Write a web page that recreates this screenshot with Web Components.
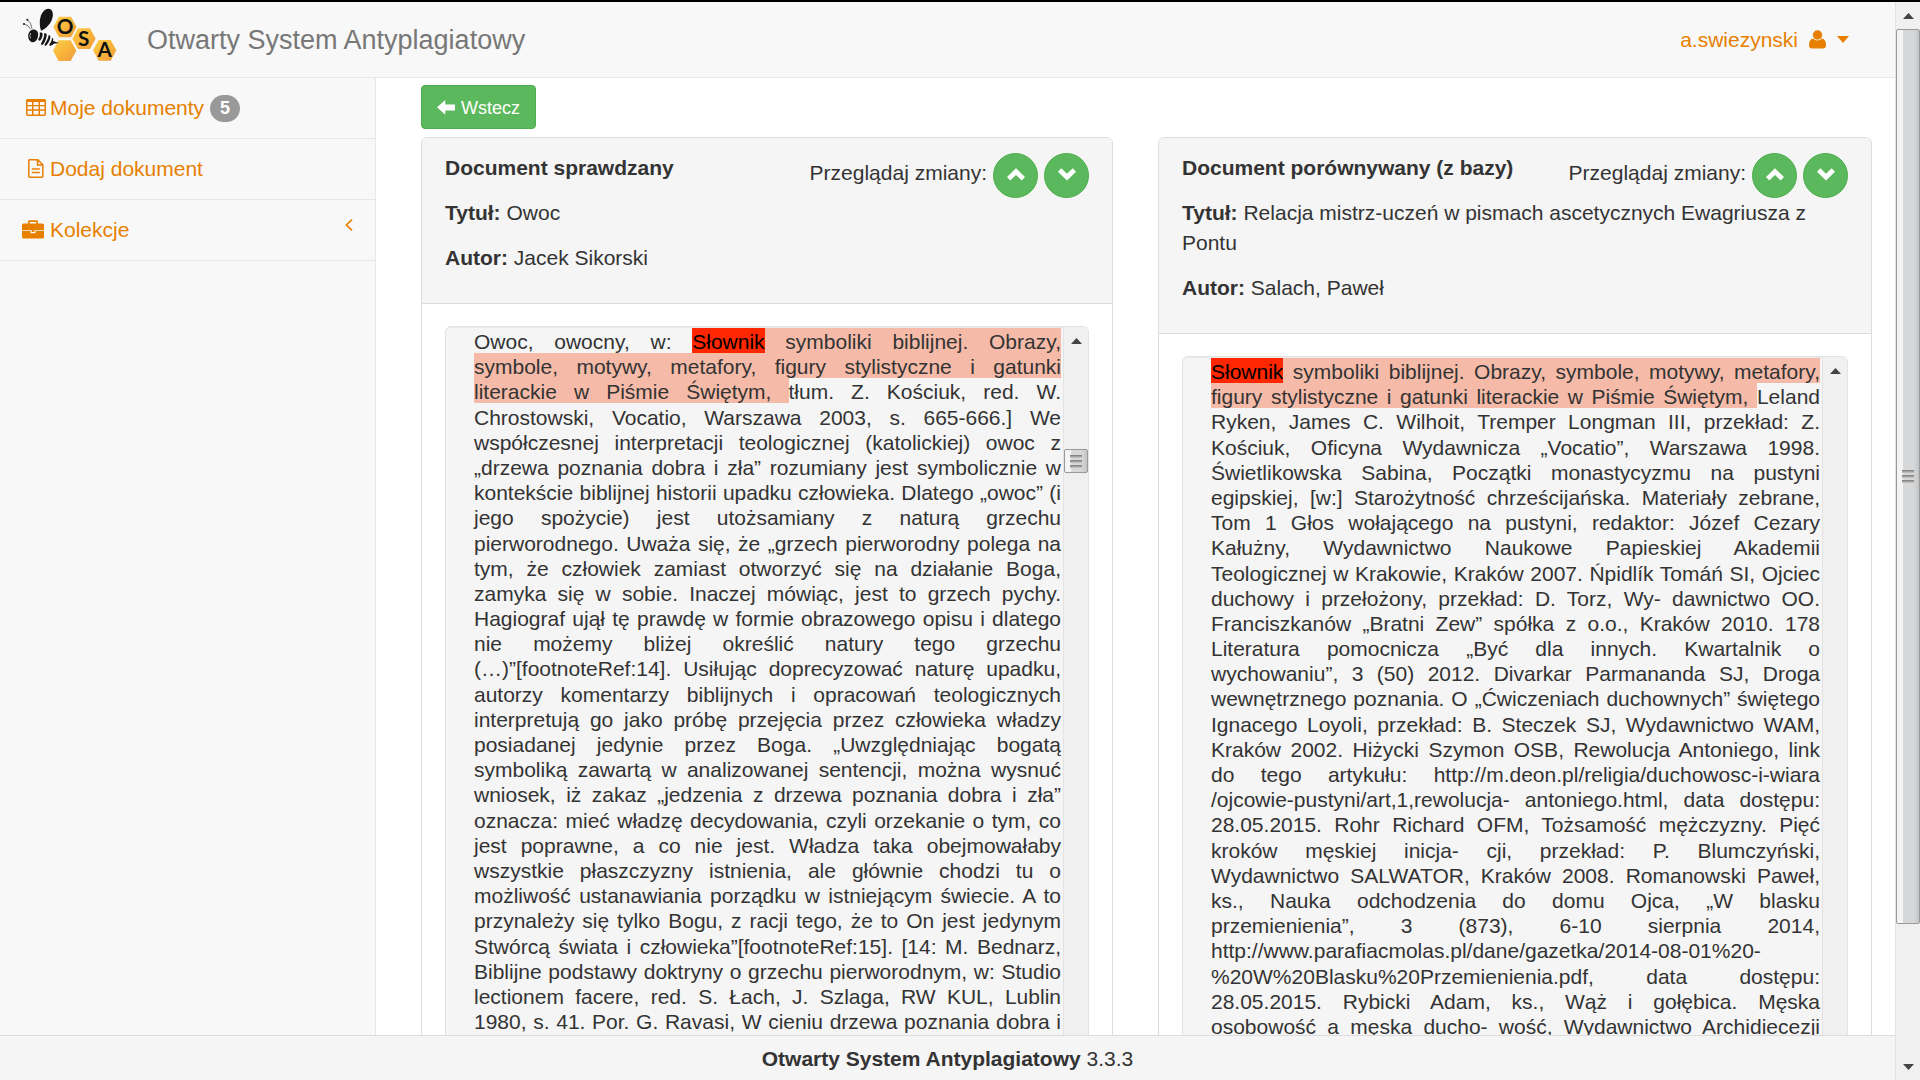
<!DOCTYPE html>
<html lang="pl">
<head>
<meta charset="utf-8">
<title>Otwarty System Antyplagiatowy</title>
<style>
  html, body { margin: 0; height: 100%; overflow: hidden; }
  body { font: 21px/30px "Liberation Sans", Arial, sans-serif; color: #333; background: #fff; }
</style>
</head>
<body>
<osa-app>
  <osa-header slot="header" user="a.swiezynski">Otwarty System Antyplagiatowy</osa-header>
  <osa-sidebar slot="sidebar">
    <osa-nav-item icon="table" badge="5">Moje dokumenty</osa-nav-item>
    <osa-nav-item icon="file">Dodaj dokument</osa-nav-item>
    <osa-nav-item icon="briefcase" expandable>Kolekcje</osa-nav-item>
  </osa-sidebar>
  <osa-back-button>Wstecz</osa-back-button>
  <osa-compare>
    <osa-document>
      <span slot="heading">Document sprawdzany</span>
      <span slot="title">Owoc</span>
      <span slot="author">Jacek Sikorski</span>
      <osa-text>Owoc, owocny, w: <osa-match current>Słownik</osa-match><osa-match> symboliki biblijnej. Obrazy, symbole, motywy, metafory, figury stylistyczne i gatunki literackie w Piśmie Świętym, </osa-match>tłum. Z. Kościuk, red. W. Chrostowski, Vocatio, Warszawa 2003, s. 665-666.] We współczesnej interpretacji teologicznej (katolickiej) owoc z „drzewa poznania dobra i zła” rozumiany jest symbolicznie w kontekście biblijnej historii upadku człowieka. Dlatego „owoc” (i jego spożycie) jest utożsamiany z naturą grzechu pierworodnego. Uważa się, że „grzech pierworodny polega na tym, że człowiek zamiast otworzyć się na działanie Boga, zamyka się w sobie. Inaczej mówiąc, jest to grzech pychy. Hagiograf ujął tę prawdę w formie obrazowego opisu i dlatego nie możemy bliżej określić natury tego grzechu (…)”[footnoteRef:14]. Usiłując doprecyzować naturę upadku, autorzy komentarzy biblijnych i opracowań teologicznych interpretują go jako próbę przejęcia przez człowieka władzy posiadanej jedynie przez Boga. „Uwzględniając bogatą symboliką zawartą w analizowanej sentencji, można wysnuć wniosek, iż zakaz „jedzenia z drzewa poznania dobra i zła” oznacza: mieć władzę decydowania, czyli orzekanie o tym, co jest poprawne, a co nie jest. Władza taka obejmowałaby wszystkie płaszczyzny istnienia, ale głównie chodzi tu o możliwość ustanawiania porządku w istniejącym świecie. A to przynależy się tylko Bogu, z racji tego, że to On jest jedynym Stwórcą świata i człowieka”[footnoteRef:15]. [14: M. Bednarz, Biblijne podstawy doktryny o grzechu pierworodnym, w: Studio lectionem facere, red. S. Łach, J. Szlaga, RW KUL, Lublin 1980, s. 41. Por. G. Ravasi, W cieniu drzewa poznania dobra i</osa-text>
      <osa-scrollbar slot="scrollbar" class="mid"></osa-scrollbar>
    </osa-document>
    <osa-document>
      <span slot="heading">Document porównywany (z bazy)</span>
      <span slot="title">Relacja mistrz-uczeń w pismach ascetycznych Ewagriusza z Pontu</span>
      <span slot="author">Salach, Paweł</span>
      <osa-text><osa-match current>Słownik</osa-match><osa-match> symboliki biblijnej. Obrazy, symbole, motywy, metafory, figury stylistyczne i gatunki literackie w Piśmie Świętym, </osa-match>Leland Ryken, James C. Wilhoit, Tremper Longman III, przekład: Z. Kościuk, Oficyna Wydawnicza „Vocatio”, Warszawa 1998. Świetlikowska Sabina, Początki monastycyzmu na pustyni egipskiej, [w:] Starożytność chrześcijańska. Materiały zebrane, Tom 1 Głos wołającego na pustyni, redaktor: Józef Cezary Kałużny, Wydawnictwo Naukowe Papieskiej Akademii Teologicznej w Krakowie, Kraków 2007. Ńpidlík Tomáń SI, Ojciec duchowy i przełożony, przekład: D. Torz, Wy- dawnictwo OO. Franciszkanów „Bratni Zew” spółka z o.o., Kraków 2010. 178 Literatura pomocnicza „Być dla innych. Kwartalnik o wychowaniu”, 3 (50) 2012. Divarkar Parmananda SJ, Droga wewnętrznego poznania. O „Ćwiczeniach duchownych” świętego Ignacego Loyoli, przekład: B. Steczek SJ, Wydawnictwo WAM, Kraków 2002. Hiżycki Szymon OSB, Rewolucja Antoniego, link do tego artykułu: http://m.deon.pl/religia/duchowosc-i-wiara<wbr>/ojcowie-pustyni/art,1,rewolucja- antoniego.html, data dostępu: 28.05.2015. Rohr Richard OFM, Tożsamość mężczyzny. Pięć kroków męskiej inicja- cji, przekład: P. Blumczyński, Wydawnictwo SALWATOR, Kraków 2008. Romanowski Paweł, ks., Nauka odchodzenia do domu Ojca, „W blasku przemienienia”, 3 (873), 6-10 sierpnia 2014, http://www.parafiacmolas.pl/dane/gazetka/2014-08-01%20-<wbr>%20W%20Blasku%20Przemienienia.pdf, data dostępu: 28.05.2015. Rybicki Adam, ks., Wąż i gołębica. Męska osobowość a męska ducho- wość, Wydawnictwo Archidiecezji</osa-text>
      <osa-scrollbar slot="scrollbar"></osa-scrollbar>
    </osa-document>
  </osa-compare>
  <osa-footer slot="footer" version="3.3.3">Otwarty System Antyplagiatowy</osa-footer>
</osa-app>

<script>
const define = (name, render) => customElements.define(name, class extends HTMLElement {
  connectedCallback() {
    if (this.shadowRoot) return;
    const t = document.createElement('template');
    t.innerHTML = render(this);
    this.attachShadow({ mode: 'open' }).append(t.content.cloneNode(true));
  }
});

const icons = {
  table: `<svg width="20" height="17" viewBox="0 0 20 17"><path fill="currentColor" fill-rule="evenodd" d="M1.700 0h16.600A1.700 1.700 0 0 1 20 1.700v13.600a1.700 1.700 0 0 1-1.700 1.700H1.700A1.700 1.700 0 0 1 0 15.300V1.700A1.700 1.700 0 0 1 1.700 0zM1.500 3v3h4.500V3zM7.500 3v3h5V3zM14 3v3h4.500V3zM1.500 7.300v3h4.500v-3zM7.500 7.300v3h5v-3zM14 7.300v3h4.500v-3zM1.500 11.700v3.800h4.500v-3.800zM7.500 11.700v3.800h5v-3.800zM14 11.700v3.800h4.500v-3.800z"/></svg>`,
  file: `<svg width="16" height="19" viewBox="0 0 16 19"><path fill="none" stroke="currentColor" stroke-width="1.500" d="M1.800.8h8l5 5v11.500a.9.900 0 0 1-.9.900H1.700a.9.900 0 0 1-.9-.9V1.700a.9.900 0 0 1 1-.9zM9.500.8v5.300h5.300M3.800 10h8M3.800 13.500h8"/></svg>`,
  briefcase: `<svg width="22" height="19" viewBox="0 0 22 19"><path fill="currentColor" fill-rule="evenodd" d="M6 3.500V1.500Q6 .3 7.200.3h7.600Q16 .3 16 1.500v2h4.500Q22 3.500 22 5v5.200H0V5q0-1.500 1.500-1.500zm1.700 0h6.600V2H7.700zM0 11h8.500v2.200h5V11H22v6q0 1.500-1.500 1.500h-19Q0 18.500 0 17z"/><path fill="currentColor" d="M9.700 10h2.600v2H9.700z"/></svg>`,
  back: `<svg width="18" height="15" viewBox="0 0 18 15"><path fill="currentColor" d="M0 7.200 8.300 0v4.400H18v6H8.300v4.300z"/></svg>`,
  up: `<svg width="18" height="13" viewBox="0 0 18 13"><path fill="currentColor" d="M9 .3 18 9l-3.300 3.500L9 7l-5.700 5.500L0 9z"/></svg>`,
  down: `<svg width="18" height="13" viewBox="0 0 18 13"><path fill="currentColor" d="M9 12.500 0 3.800 3.300.3 9 5.800 14.700.3 18 3.800z"/></svg>`,
  user: `<svg width="17" height="19" viewBox="0 0 17 19"><circle cx="8.500" cy="5" r="4.700" fill="currentColor"/><path fill="currentColor" d="M4 8.500q4.500 4 9 0 4 .8 4 6.500 0 3.500-3.200 3.500H3.200Q0 18.500 0 15q0-5.700 4-6.500z"/></svg>`,
  caret: `<svg width="12" height="7" viewBox="0 0 12 7"><path fill="currentColor" d="M0 0h12L6 7z"/></svg>`,
  angle: `<svg width="8" height="12" viewBox="0 0 8 12"><path fill="none" stroke="currentColor" stroke-width="1.600" d="M7 .6 1.400 6 7 11.400"/></svg>`
};

const hex = (x, y) => `<path fill="url(#honey)" d="M${x - 35} ${y}l17-31h36l17 31-17 31h-36z"/>`;
const logo = `<svg width="100" height="75" viewBox="30 6 300 225" role="img" aria-label="OSA">
  <defs><linearGradient id="honey" x1="0" y1="0" x2="1" y2="1"><stop offset="0" stop-color="#fdd04a"/><stop offset=".5" stop-color="#f8b53a"/><stop offset="1" stop-color="#ee9a3e"/></linearGradient></defs>
  ${hex(165, 81)}${hex(222, 116)}${hex(284, 151)}${hex(164, 152)}
  <g fill="#151515">
    <path d="M93 92c-8-24-3-55 15-64 14-6 23 6 20 22-4 20-18 34-35 42z"/>
    <path d="M60 93c8-8 22-6 24 6 2 14-5 28-16 28-12 0-19-22-8-34z"/>
    <path d="M89 98c5-2 9 0 9 4 0 10-4 16-8 20-5 0-6-3-4-7 4-6 4-11 3-17z"/>
    <path d="M103 99c5 0 8 3 7 8-2 13-7 23-14 29-3-1-4-5-1-9 5-9 8-18 8-28z"/>
    <path d="M116 105c4 1 6 4 5 9-3 11-8 20-15 24-3-1-3-5 0-8 5-8 9-16 10-25z"/>
    <path d="M126 113c4 2 5 6 3 10l18 6-16 2c-4 4-8 6-12 6-2-2-1-5 2-8 3-5 5-10 5-16z"/>
    <circle cx="52" cy="59" r="3"/><circle cx="42" cy="72" r="3"/>
  </g>
  <path fill="none" stroke="#333" stroke-width="2" d="M52 59q12 8 14 27M42 72q14 2 20 16"/>
  <path fill="none" stroke="#f8f8f8" stroke-width="2" d="M62 99q-5 8 0 16"/>
  <g font-family="Lato, sans-serif" font-weight="700" font-size="62" text-anchor="middle" fill="#111">
    <text x="165" y="103">O</text><text x="221" y="137">S</text><text x="284" y="172">A</text>
  </g></svg>`;

define('osa-app', () => `<style>
  :host { display: flex; height: 100vh; box-sizing: border-box; border-top: 2px solid #000; }
  .page { flex: 1; min-width: 0; display: flex; flex-direction: column; }
  .middle { flex: 1; min-height: 0; display: flex; }
  main { flex: 1; min-width: 0; overflow: hidden; padding: 7px 23px 0 45px; }
</style>
<div class="page"><slot name="header"></slot>
  <div class="middle"><slot name="sidebar"></slot><main><slot></slot></main></div>
  <slot name="footer"></slot></div>
<osa-scrollbar page></osa-scrollbar>`);

define('osa-header', el => `<style>
  :host { display: block; background: #f8f8f8; border-bottom: 1px solid #e7e7e7; }
  header { display: flex; align-items: center; padding: 0 46px 0 20px; }
  svg { display: block; }
  .brand { display: flex; align-items: center; gap: 27px; color: #777; font-size: 27px; text-decoration: none; }
  .user { margin-left: auto; display: flex; align-items: center; gap: 11px; color: #e77f00; text-decoration: none; }
</style>
<header><a class="brand" href="#">${logo}<span><slot></slot></span></a>
<a class="user" href="#"><span>${el.getAttribute('user')}</span>${icons.user}${icons.caret}</a></header>`);

define('osa-sidebar', () => `<style>
  :host { display: block; flex: none; width: 375px; background: #f8f8f8; border-right: 1px solid #e7e7e7; }
</style><nav><slot></slot></nav>`);

define('osa-nav-item', el => `<style>
  :host { display: block; border-bottom: 1px solid #e7e7e7; }
  a { display: flex; align-items: center; padding: 15px 22px; color: #e77f00; text-decoration: none; }
  .icon { width: 28px; display: flex; justify-content: center; padding-bottom: 2px; }
  :host([icon="briefcase"]) .icon { justify-content: flex-start; }
  .badge { margin-left: 6px; padding: 0 10px; border-radius: 14px; background: #999; color: #fff; font-size: 18px; font-weight: 700; line-height: 27px; }
  .angle { margin-left: auto; display: flex; padding-bottom: 10px; }
</style>
<a href="#"><span class="icon">${icons[el.getAttribute('icon')]}</span><span><slot></slot></span>
${el.hasAttribute('badge') ? `<span class="badge">${el.getAttribute('badge')}</span>` : ''}
${el.hasAttribute('expandable') ? `<span class="angle">${icons.angle}</span>` : ''}</a>`);

define('osa-back-button', () => `<style>
  :host { display: flex; margin-bottom: 8px; }
  button { display: flex; align-items: center; gap: 6px; height: 44px; padding: 1px 15px 0; border: 1px solid #4cae4c; border-radius: 4px; background: #5cb85c; color: #fff; font: inherit; font-size: 18px; }
</style><button type="button">${icons.back}<span><slot></slot></span></button>`);

define('osa-compare', () => `<style>
  :host { display: grid; grid-template-columns: 692fr 714fr; gap: 45px; align-items: start; }
</style><slot></slot>`);

define('osa-document', () => `<style>
  :host { display: block; min-width: 0; border: 1px solid #ddd; border-radius: 6px; }
  .head { padding: 15px 23px; background: #f5f5f5; border-bottom: 1px solid #ddd; border-radius: 5px 5px 0 0; }
  .top { display: flex; justify-content: space-between; height: 30px; margin-bottom: 15px; }
  .browse { display: flex; align-items: flex-start; gap: 6px; }
  .browse span { padding-top: 5px; }
  p { margin: 0 0 15px; }
  button { display: flex; align-items: center; justify-content: center; width: 45px; height: 45px; padding: 0 0 2px; border: 1px solid #4cae4c; border-radius: 50%; background: #5cb85c; color: #fff; }
  .body { padding: 22px 23px; }
  .well { display: flex; min-height: 900px; border: 1px solid #e3e3e3; border-radius: 6px; background: #f5f5f5; box-shadow: inset 0 1px 1px rgba(0,0,0,.05); }
  .text { flex: 1; min-width: 0; padding: 2px 2px 0 28px; }
</style>
<div class="head">
  <div class="top"><strong><slot name="heading"></slot></strong>
    <div class="browse"><span>Przeglądaj zmiany:</span>
      <button type="button" aria-label="Poprzednia zmiana">${icons.up}</button>
      <button type="button" aria-label="Następna zmiana">${icons.down}</button></div></div>
  <p><strong>Tytuł:</strong> <slot name="title"></slot></p>
  <p><strong>Autor:</strong> <slot name="author"></slot></p>
</div>
<div class="body"><div class="well"><div class="text"><slot></slot></div><slot name="scrollbar"></slot></div></div>`);

define('osa-text', () => `<style>
  :host { display: block; line-height: 1.2; text-align: justify; text-align-last: justify; }
</style><slot></slot>`);

define('osa-match', () => `<style>
  :host { background: #f5bba8; padding-top: 2px; }
  :host([current]) { background: #ff2600; color: #000; }
</style><slot></slot>`);

define('osa-scrollbar', el => `<style>
  :host { display: flex; flex-direction: column; flex: none; width: 25px; box-sizing: border-box; background: #f0f0f0; border-left: 1px solid #e3e3e3; }
  .arrow { height: 27px; display: flex; align-items: center; justify-content: center; }
  .thumb { display: flex; flex-direction: column; align-items: center; justify-content: center; gap: 2px; height: 24px; box-sizing: border-box; border: 1px solid #999; border-radius: 2px; background: linear-gradient(90deg, #f4f4f4 0 25%, #d6d7d9 30% 75%, #c4c5c7); }
  .thumb i { width: 12px; height: 3px; background: linear-gradient(#777, #ccc); }
  .before { height: 95px; }
  :host(:not([page]):not(.mid)) .thumb { display: none; }
  :host([page]) .thumb { flex: 895; }
  .after { flex: 129; }
</style>
<div class="arrow"><svg width="11" height="6" viewBox="0 0 11 6"><path fill="#444" d="M0 6 5.500 0 11 6z"/></svg></div>
${el.hasAttribute('page') ? '' : '<div class="before"></div>'}
<div class="thumb"><i></i><i></i><i></i></div><div class="after"></div>
<div class="arrow"><svg width="11" height="6" viewBox="0 0 11 6"><path fill="#444" d="M0 0h11L5.500 6z"/></svg></div>`);

define('osa-footer', el => `<style>
  :host { display: block; padding: 8px 0 6px; border-top: 1px solid #ddd; background: #f5f5f5; text-align: center; }
</style><footer><strong><slot></slot></strong> ${el.getAttribute('version')}</footer>`);
</script>
</body>
</html>
